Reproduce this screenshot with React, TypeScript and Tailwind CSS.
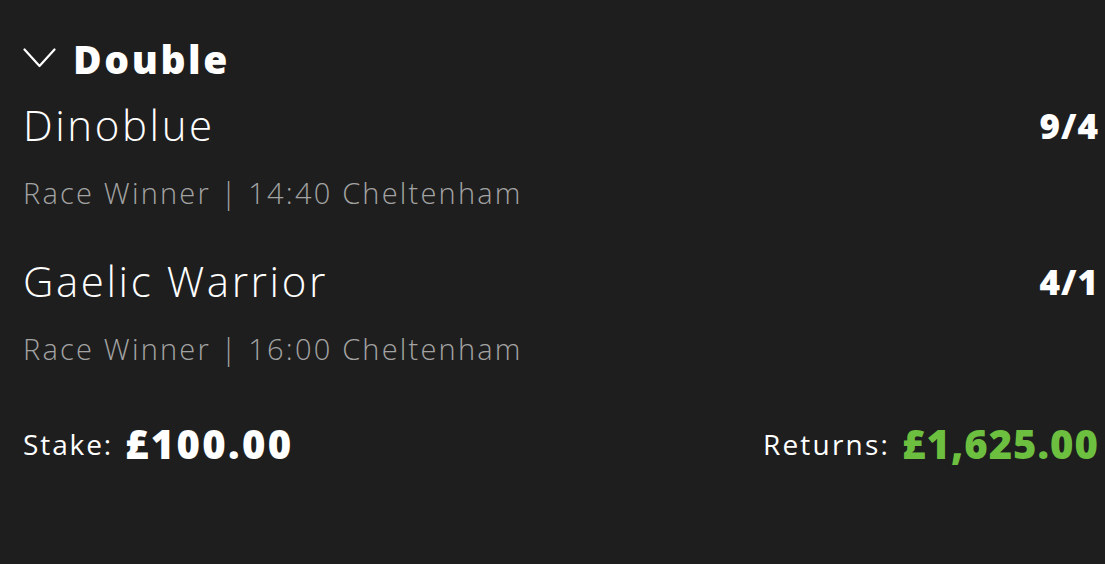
import React from "react";

const font = { fontFamily: '"Open Sans", "Noto Sans", sans-serif' };

function Selection({ name, odds, market }: { name: string; odds: string; market: string }) {
  return (
    <div className="flex flex-col">
      <div className="flex h-[70px] items-center justify-between">
        <span className="text-[42px] font-light leading-none tracking-[2.6px] text-white">{name}</span>
        <span className="mr-[-1px] text-[35px] font-extrabold leading-none tracking-[1px] text-white">{odds}</span>
      </div>
      <div className="flex h-[64px] items-center text-[29px] font-light leading-none tracking-[2.2px] text-[#a3a3a3]">
        {market}
      </div>
    </div>
  );
}

export default function App() {
  return (
    <div style={font} className="h-[564px] w-[1105px] bg-[#1e1e1e] pl-[23px] pr-[7px] pt-[28px]">
      <div className="flex h-[60px] items-center gap-[17px]">
        <svg width="33" height="20" viewBox="0 0 33 20" fill="none" className="shrink-0">
          <path d="M1.5 1.5 L16.5 18 L31.5 1.5" stroke="white" strokeWidth="2.2" strokeLinecap="round" strokeLinejoin="round" />
        </svg>
        <span className="text-[39px] font-extrabold leading-none tracking-[2.6px] text-white">Double</span>
      </div>
      <div className="h-[2px]" />
      <Selection name="Dinoblue" odds="9/4" market="Race Winner | 14:40 Cheltenham" />
      <div className="h-[22px]" />
      <Selection name="Gaelic Warrior" odds="4/1" market="Race Winner | 16:00 Cheltenham" />
      <div className="h-[34px]" />
      <div className="flex h-[60px] items-center justify-between">
        <div className="flex items-center gap-[12px]">
          <span className="text-[28px] font-normal leading-none tracking-[1.9px] text-white">Stake:</span>
          <span className="text-[40px] font-extrabold leading-none tracking-[2.3px] text-white">£100.00</span>
        </div>
        <div className="mr-[-1px] flex items-center gap-[12px]">
          <span className="text-[28px] font-normal leading-none tracking-[2.2px] text-white">Returns:</span>
          <span className="text-[40px] font-extrabold leading-none tracking-[1px] text-[#6dbf40]">£1,625.00</span>
        </div>
      </div>
    </div>
  );
}
